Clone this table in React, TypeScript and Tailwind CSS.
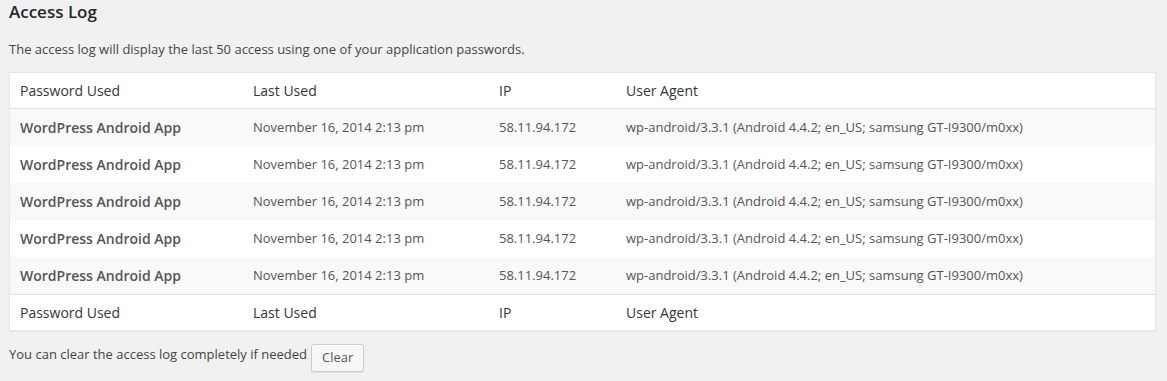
import React from "react";

const rows = Array.from({ length: 5 }, () => ({
  name: "WordPress Android App",
  date: "November 16, 2014 2:13 pm",
  ip: "58.11.94.172",
  agent: "wp-android/3.3.1 (Android 4.4.2; en_US; samsung GT-I9300/m0xx)",
}));

const cols = "grid grid-cols-[233px_246px_127px_1fr]";

function HeadRow({ border }: { border: string }) {
  return (
    <div className={`${cols} h-[36px] items-center text-[14px] text-[#32373c] ${border}`}>
      <div className="px-[10px]">Password Used</div>
      <div className="px-[10px]">Last Used</div>
      <div className="px-[10px]">IP</div>
      <div className="px-[10px]">User Agent</div>
    </div>
  );
}

export default function App() {
  return (
    <div
      className="min-h-[381px] bg-[#f1f1f1] pl-[9px] pr-[11px] text-[13px] text-[#444]"
      style={{ fontFamily: '"Open Sans", "Noto Sans", sans-serif' }}
    >
      <h3 className="text-[17px] font-semibold leading-[24px] text-[#23282d]">Access Log</h3>
      <p className="mt-[16px] leading-[18px]">
        The access log will display the last 50 access using one of your application passwords.
      </p>

      <div className="mt-[14px] border border-[#e5e5e5] bg-white shadow-[0_1px_1px_rgba(0,0,0,0.04)]">
        <HeadRow border="border-b border-[#e1e1e1]" />
        {rows.map((r, i) => (
          <div
            key={i}
            className={`${cols} h-[37px] items-center text-[#555] ${i % 2 === 0 ? "bg-[#f9f9f9]" : "bg-white"}`}
          >
            <div className="px-[10px] text-[14px] font-semibold">{r.name}</div>
            <div className="px-[10px]">{r.date}</div>
            <div className="px-[10px]">{r.ip}</div>
            <div className="px-[10px]">{r.agent}</div>
          </div>
        ))}
        <HeadRow border="border-t border-[#e1e1e1]" />
      </div>

      <div className="mt-[13px] flex items-center gap-[4px]">
        <span className="-mt-[6px]">You can clear the access log completely if needed</span>
        <button className="h-[28px] rounded-[3px] border border-[#ccc] bg-[#f7f7f7] px-[10px] text-[13px] text-[#555] shadow-[inset_0_1px_0_#fff,0_1px_0_rgba(0,0,0,0.08)]">
          Clear
        </button>
      </div>
    </div>
  );
}
